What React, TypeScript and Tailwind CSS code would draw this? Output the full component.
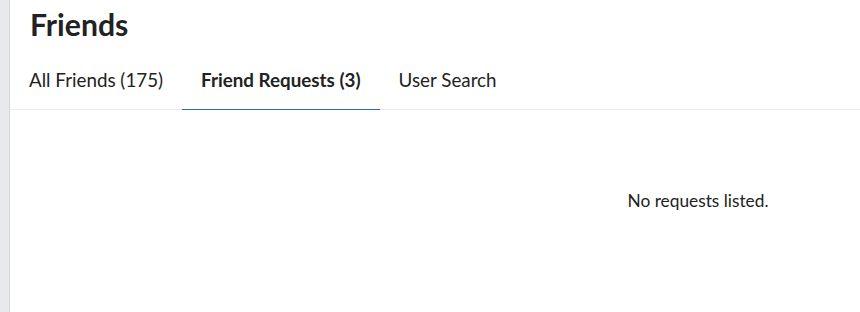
const tabs = [
  { label: 'All Friends (175)', active: false },
  { label: 'Friend Requests (3)', active: true },
  { label: 'User Search', active: false },
]

export default function App() {
  return (
    <div
      className="flex h-[312px] w-[860px] overflow-hidden bg-white text-[#222]"
      style={{ fontFamily: 'Lato, "Open Sans", sans-serif' }}
    >
      {/* Left rail */}
      <div className="w-[10px] shrink-0 border-r border-[#d5d8dc] bg-[#e8e9ec]" />

      <div className="flex flex-1 flex-col">
        <h1 className="pl-[20px] pt-[4px] text-[30.2px] font-bold leading-[40px]">Friends</h1>

        {/* Tabs */}
        <div className="mt-[24px] flex border-b border-[#ebebeb]">
          {tabs.map((tab) => (
            <div
              key={tab.label}
              className={`-mb-px px-[19px] pb-[17px] text-[18.8px] leading-[24px] ${
                tab.active ? 'border-b border-[#2a6cad] font-bold' : 'border-b border-transparent'
              }`}
            >
              {tab.label}
            </div>
          ))}
        </div>

        {/* Content */}
        <div className="grid flex-1 grid-cols-[526px_1fr] pt-[80px]">
          <div />
          <p className="text-center text-[17.3px] leading-[22px]">No requests listed.</p>
        </div>
      </div>
    </div>
  )
}
